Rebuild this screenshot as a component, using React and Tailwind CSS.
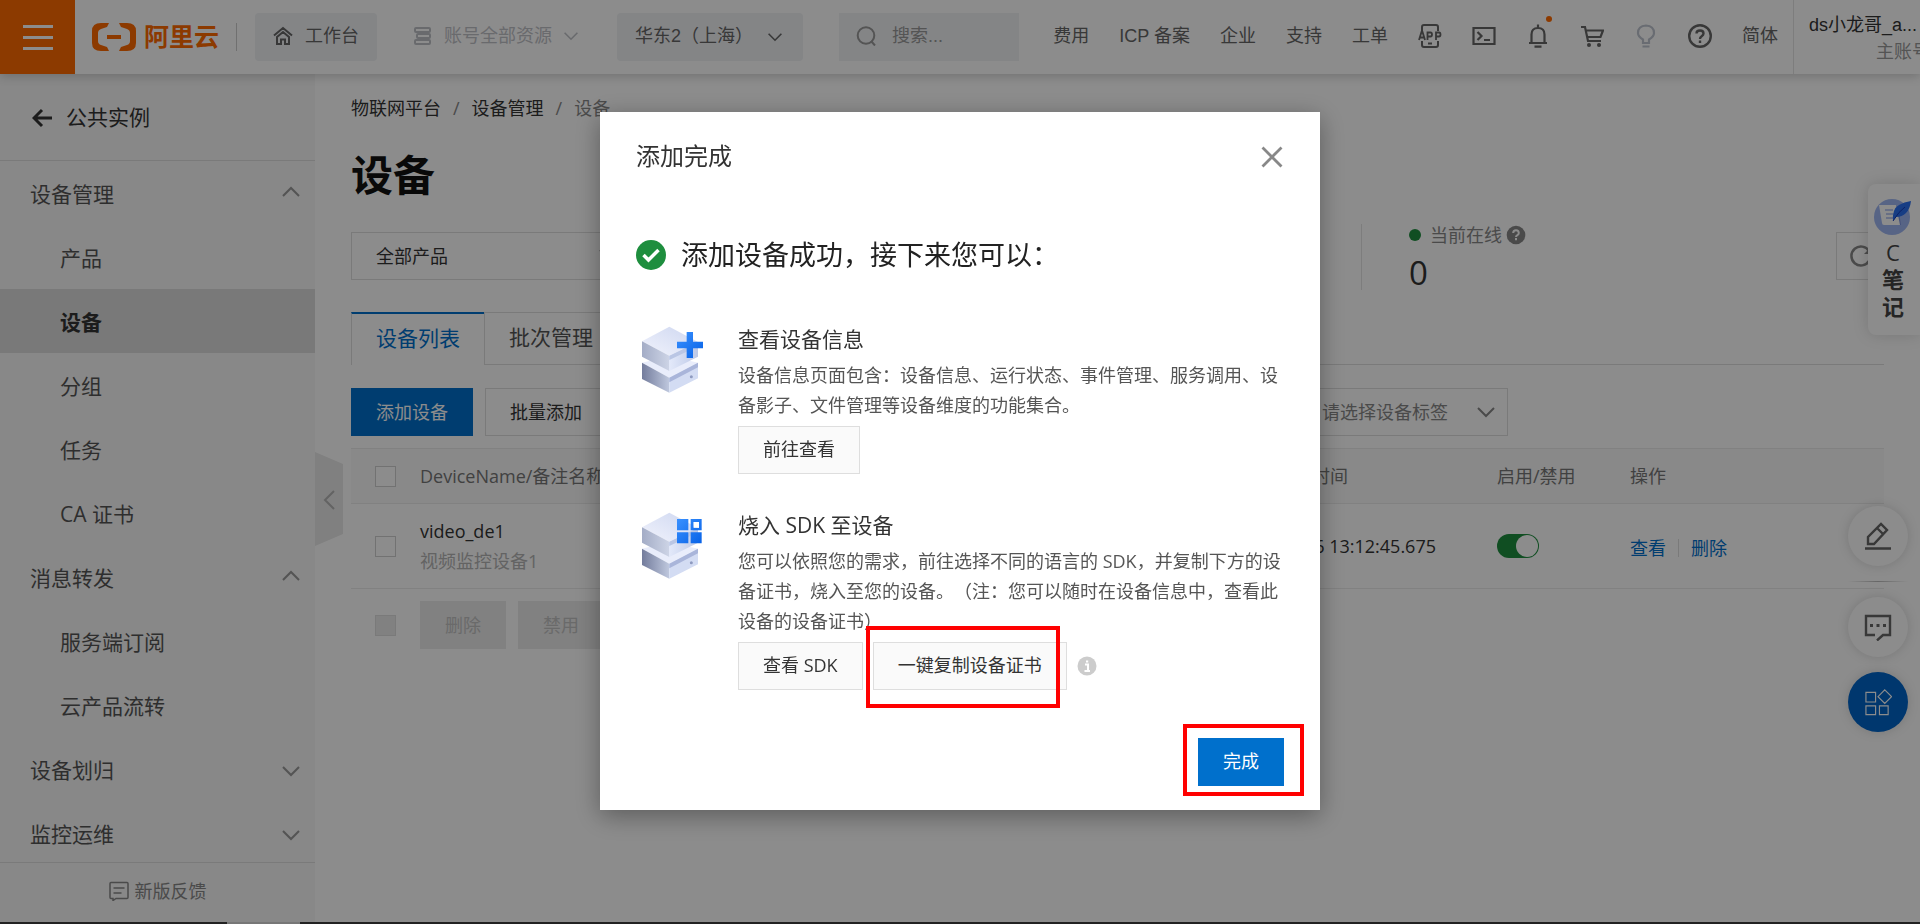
import { useState } from 'react'

const topLinks = ['费用', 'ICP 备案', '企业', '支持', '工单']

const menu = [
  { label: '设备管理', open: true, children: ['产品', '设备', '分组', '任务', 'CA 证书'] },
  { label: '消息转发', open: true, children: ['服务端订阅', '云产品流转'] },
  { label: '设备划归', open: false, children: [] },
  { label: '监控运维', open: false, children: [] },
]

const Chevron = ({ up, className }) => (
  <svg viewBox="0 0 20 20" fill="none" stroke="currentColor" strokeWidth="2" className={className}>
    <path d={up ? 'M2 11l8-8 8 8' : 'M2 6l8 8 8-8'} />
  </svg>
)

const Logo = () => (
  <svg viewBox="0 0 44 28" fill="#ff6a00" className="h-7 w-11">
    <path d="M17 0H9Q0 0 0 8v12q0 8 9 8h8l-2-4-6-2q-3-1-3-4v-8q0-3 3-4l6-2z" />
    <path d="M27 0h8q9 0 9 8v12q0 8-9 8h-8l2-4 6-2q3-1 3-4v-8q0-3-3-4l-6-2z" />
    <path d="M15 12h14v4H15z" />
  </svg>
)

const HomeIcon = () => (
  <svg viewBox="0 0 20 20" fill="none" stroke="currentColor" strokeWidth="2" className="size-5">
    <path d="M1 9.500L10 2l9 7.500M4 18v-7l6-5 6 5v7h-4v-4.500H8V18z" />
  </svg>
)

const ResourceIcon = () => (
  <svg viewBox="0 0 20 20" fill="none" stroke="currentColor" strokeWidth="2" className="size-5">
    <rect x="2" y="2" width="15" height="4" rx="1" />
    <rect x="4" y="8" width="13" height="4" rx="1" />
    <rect x="2" y="14" width="15" height="4" rx="1" />
  </svg>
)

const AppIcon = () => (
  <svg viewBox="0 0 24 24" fill="none" stroke="currentColor" strokeWidth="2" className="size-6">
    <path d="M4 7V3q0-2 2-2h12q2 0 2 2v4M4 17v4q0 2 2 2h12q2 0 2-2v-4" />
    <path d="M1 16l2.500-8h1l2.500 8M2 13.500h4M9.500 16V8.500h3q1.500 0 1.500 2t-1.500 2h-3M18 16V8.500h3q1.500 0 1.500 2t-1.500 2h-3" strokeWidth="1.800" />
    <path d="M10 19.500h4" />
  </svg>
)

const TerminalIcon = () => (
  <svg viewBox="0 0 24 24" fill="none" stroke="currentColor" strokeWidth="2.200" className="size-6">
    <path d="M1.500 4h21v16h-21zM5.500 8l4 4-4 4M12 16h6" />
  </svg>
)

const BellIcon = () => (
  <svg viewBox="0 0 24 24" fill="none" stroke="currentColor" strokeWidth="2.200" className="size-6">
    <path d="M3 19h18M5.500 19v-8.500q0-6.500 6.500-6.500t6.500 6.500V19M12 4V.500M8.500 22.700h7" />
  </svg>
)

const CartIcon = () => (
  <svg viewBox="0 0 24 24" fill="none" stroke="currentColor" strokeWidth="2.200" className="size-6">
    <path d="M1 3h4l3 14h13M6 6.500h17l-2.500 6.500H7.500" />
    <circle cx="9" cy="21" r="2" fill="currentColor" stroke="none" />
    <circle cx="19" cy="21" r="2" fill="currentColor" stroke="none" />
  </svg>
)

const BulbIcon = () => (
  <svg viewBox="0 0 24 24" fill="none" stroke="currentColor" strokeWidth="2.200" className="size-6">
    <path d="M9 19v-3.500Q4 12.500 4 9q0-7 8-7.500 8 .500 8 7.500 0 3.500-5 6.500V19zM8.500 22.500h7" />
  </svg>
)

const HelpIcon = () => (
  <svg viewBox="0 0 24 24" fill="none" stroke="currentColor" strokeWidth="2.400" className="size-6">
    <circle cx="12" cy="12" r="10.800" />
    <path d="M8.500 9.500Q8.500 6.500 12 6.500t3.500 3q0 1.500-1.800 2.700T12 15" />
    <path d="M12 16.500v2.500" />
  </svg>
)

const ServerIcon = ({ id, children }) => (
  <svg viewBox="60 45 195 210" className="h-[70px] w-[65px] shrink-0">
    <defs>
      <linearGradient id={`${id}-top`} x1="0" x2="1" y1="1" y2="0">
        <stop offset="0" stopColor="#f1f3fc" />
        <stop offset="1" stopColor="#cdd6f0" />
      </linearGradient>
      <linearGradient id={`${id}-left`}>
        <stop offset="0" stopColor="#a3acc6" />
        <stop offset="1" stopColor="#cdd4e6" />
      </linearGradient>
      <linearGradient id={`${id}-right`}>
        <stop offset="0" stopColor="#e3e9fa" />
        <stop offset="1" stopColor="#bcc8e6" />
      </linearGradient>
      <linearGradient id={`${id}-dark`}>
        <stop offset="0" stopColor="#737c9c" />
        <stop offset="1" stopColor="#bfc8de" />
      </linearGradient>
      <linearGradient id={`${id}-blue`} gradientUnits="userSpaceOnUse" x1="171" x2="249" y1="66" y2="144">
        <stop offset="0" stopColor="#3b92ff" />
        <stop offset="1" stopColor="#0560e6" />
      </linearGradient>
    </defs>
    <path d="M66 158l82-20 86 20-86 45z" fill="#e9edfb" />
    <path d="M66 158l82 45v45l-82-41z" fill={`url(#${id}-dark)`} />
    <path d="M148 203l86-45v47l-86 43z" fill="#d3dcf3" />
    <path d="M148 203l86-45v14l-86 45z" fill="#a9b5da" />
    <path d="M148 50L66 94l82 43 86-41z" fill={`url(#${id}-top)`} />
    <path d="M66 94l82 43v46l-82-43z" fill={`url(#${id}-left)`} />
    <path d="M148 137l86-41v44l-86 43z" fill={`url(#${id}-right)`} />
    <path d="M148 137l86-41v13l-86 41z" fill="#bac6e4" />
    <circle cx="214" cy="200" r="4.500" fill="#8f9bc0" />
    {children}
  </svg>
)

const NoteIcon = () => (
  <svg viewBox="0 0 40 38" className="h-[38px] w-10">
    <circle cx="19" cy="20" r="18" fill="#9fb6f2" />
    <path d="M8 9h17l3 19H12q-2 0-2-3z" fill="#7d94e0" />
    <path d="M6 8h17l4 20H11q-2 0-2-2z" fill="#fff" />
    <path d="M12 13h8M13 17h8M13 21h8" stroke="#a9b9ee" strokeWidth="1.500" />
    <path d="M20 24q-1-12 6-16 5-3 12-4-1 8-5 12-4 4-10 4z" fill="#2a6ff0" />
    <path d="M20 24q6-10 12-14" stroke="#173bb8" fill="none" />
  </svg>
)

const DefaultButton = ({ children, onClick }) => (
  <button
    type="button"
    onClick={onClick}
    className="h-12 border border-[#dedede] bg-[#fafafa] px-6 pb-0.5 text-lg text-[#333] hover:bg-gray-100"
  >
    {children}
  </button>
)

const Check = ({ label, disabled }) => (
  <input
    type="checkbox"
    aria-label={label}
    disabled={disabled}
    className="block size-[21px] appearance-none border border-[#d0d0d0] bg-white disabled:border-[#dedede] disabled:bg-[#ebebeb]"
  />
)

const Header = () => (
  <header className="relative z-10 flex h-[74px] shrink-0 items-center bg-white font-['Liberation_Sans','Noto_Sans_CJK_SC',sans-serif] text-lg text-[#666] shadow-[0_2px_10px_rgba(0,0,0,0.2)]">
    <button type="button" aria-label="菜单" className="flex h-full w-[75px] shrink-0 flex-col items-center justify-center gap-2 bg-[#ff6a00]">
      <span className="h-[3px] w-[30px] bg-white" />
      <span className="h-[3px] w-[30px] bg-white" />
      <span className="h-[3px] w-[30px] bg-white" />
    </button>
    <a href="#" className="ml-[17px] flex shrink-0 items-center gap-2 text-[25px] font-bold text-[#ff6a00]">
      <Logo />
      阿里云
    </a>
    <span className="ml-[17px] h-7 w-px shrink-0 bg-[#ccc]" />
    <a href="#" className="ml-[18px] flex h-12 shrink-0 items-center gap-3 rounded-sm bg-[#f0f2f5] pr-[18px] pb-0.5 pl-[18px]">
      <HomeIcon />
      工作台
    </a>
    <button type="button" className="ml-9 flex shrink-0 items-center gap-[11px] pb-0.5 text-[#bfc2c7]">
      <ResourceIcon />
      账号全部资源
      <Chevron className="size-4" />
    </button>
    <div className="relative ml-[38px] w-[186px] shrink-0">
      <select aria-label="地域" className="h-12 w-full appearance-none rounded-sm bg-[#f0f2f5] pb-0.5 pl-[18px]">
        <option>华东2（上海）</option>
      </select>
      <Chevron className="pointer-events-none absolute top-4 right-5 size-4" />
    </div>
    <div className="ml-9 flex h-12 w-[180px] items-center gap-4 bg-[#f0f2f5] pb-0.5 pl-[17px]">
      <svg viewBox="0 0 20 20" fill="none" stroke="#999" strokeWidth="2" className="size-5 shrink-0">
        <circle cx="10" cy="9.500" r="8.300" />
        <path d="M15 15l4 4.500" />
      </svg>
      <input type="text" aria-label="搜索" placeholder="搜索..." className="w-full min-w-0 bg-transparent outline-none placeholder:text-[#999]" />
    </div>
    <nav className="ml-auto flex shrink-0 items-center gap-[30px] pr-[15px] pb-0.5">
      {topLinks.map((text) => (
        <a key={text} href="#">{text}</a>
      ))}
      <a href="#" aria-label="App"><AppIcon /></a>
      <a href="#" aria-label="Cloud Shell"><TerminalIcon /></a>
      <a href="#" aria-label="消息" className="relative">
        <BellIcon />
        <span className="absolute -top-2 -right-0.5 size-1.5 rounded-full bg-[#ff6a00]" />
      </a>
      <a href="#" aria-label="购物车"><CartIcon /></a>
      <a href="#" aria-label="提示" className="text-[#bfc5d0]"><BulbIcon /></a>
      <a href="#" aria-label="帮助"><HelpIcon /></a>
      <a href="#">简体</a>
    </nav>
    <div className="h-full w-[127px] shrink-0 overflow-hidden border-l border-[#e3e3e3] pt-3 pl-[15px] leading-[27px]">
      <div className="flex w-[121px] flex-col whitespace-nowrap">
        <span className="text-[#333]">ds小龙哥_a...</span>
        <span className="text-right text-[#999]">主账号</span>
      </div>
    </div>
  </header>
)

const Sidebar = () => (
  <aside className="relative flex w-[315px] shrink-0 flex-col bg-[#f7f7f7] text-[21px] text-[#555]">
    <a href="#" className="flex h-[87px] shrink-0 items-center gap-[14px] border-b border-[#dedede] pt-0.5 pl-8 text-[#333]">
      <svg viewBox="0 0 20 20" fill="none" stroke="currentColor" strokeWidth="3" className="size-5">
        <path d="M10 2l-8 8 8 8M2 10h18" />
      </svg>
      公共实例
    </a>
    <nav className="min-h-0 flex-1 overflow-hidden">
      {menu.map((group) => (
        <div key={group.label}>
          <button type="button" className="flex h-16 w-full items-center justify-between pt-1 pr-[14px] pl-[30px]">
            {group.label}
            <Chevron up={group.open} className="size-5 text-[#999]" />
          </button>
          {group.children.map((item) => (
            <a
              key={item}
              href="#"
              className={
                item === '设备'
                  ? 'flex h-16 items-center bg-[#dcdcdc] pt-1 pl-[60px] font-bold text-[#333]'
                  : 'flex h-16 items-center pt-1 pl-[60px]'
              }
            >
              {item}
            </a>
          ))}
        </div>
      ))}
    </nav>
    <a href="#" className="flex h-[60px] shrink-0 items-center justify-center gap-[6px] border-t border-[#dedede] pb-1 text-lg text-[#888]">
      <svg viewBox="0 0 20 20" fill="none" stroke="currentColor" strokeWidth="1.500" className="size-5">
        <path d="M2 1.500h16q1 0 1 1v14q0 1-1 1H7l-3 2v-2H2q-1 0-1-1v-14q0-1 1-1zM4.500 7h11M4.500 12h8" />
      </svg>
      新版反馈
    </a>
    <button type="button" aria-label="收起菜单" className="absolute top-[378px] left-full text-[#b5b5b5]">
      <svg viewBox="0 0 28 94" className="h-[94px] w-7">
        <path d="M0 0l28 12v70L0 94z" fill="#e9e9e9" />
        <path d="M19 39l-9 9 9 9" fill="none" stroke="currentColor" strokeWidth="2" />
      </svg>
    </button>
  </aside>
)

const DeviceTable = () => {
  const [enabled, setEnabled] = useState(true)

  return (
    <table className="mt-3 w-full table-fixed text-left">
      <colgroup>
        <col className="w-[45px]" />
        <col className="w-[300px]" />
        <col />
        <col className="w-[257px]" />
        <col className="w-[133px]" />
        <col className="w-[278px]" />
      </colgroup>
      <thead>
        <tr className="h-[55px] border-y border-[#ebebeb] bg-[#fafafa] text-[#777]">
          <th className="pl-6"><Check label="全选" /></th>
          <th className="pl-6 font-normal">DeviceName/备注名称</th>
          <th className="pl-6 font-normal">设备所属产品</th>
          <th className="pl-6 font-normal">最后上线时间</th>
          <th className="pl-6 font-normal">启用/禁用</th>
          <th className="pl-6 font-normal">操作</th>
        </tr>
      </thead>
      <tbody>
        <tr className="h-[85px] border-b border-[#ebebeb] text-[#333]">
          <td className="pl-6"><Check label="video_de1" /></td>
          <td className="pl-6 leading-[30px]">
            <div>video_de1</div>
            <div className="text-[#b5b5b5]">视频监控设备1</div>
          </td>
          <td />
          <td className="pr-[37px] text-right whitespace-nowrap">2021/12/06 13:12:45.675</td>
          <td className="pl-6">
            <label className="block w-[42px]">
              <input
                type="checkbox"
                aria-label="启用"
                checked={enabled}
                onChange={(e) => setEnabled(e.target.checked)}
                className="peer sr-only"
              />
              <span className="flex h-6 w-[42px] justify-start rounded-full bg-gray-300 p-px peer-checked:justify-end peer-checked:bg-[#1e8e3e]">
                <span className="size-[22px] rounded-full bg-white" />
              </span>
            </label>
          </td>
          <td className="pt-1 pl-6">
            <div className="flex items-center text-[#0070cc]">
              <a href="#">查看</a>
              <span className="mx-3 h-[18px] w-px bg-[#dedede]" />
              <a href="#">删除</a>
            </div>
          </td>
        </tr>
      </tbody>
    </table>
  )
}

const DevicePage = () => (
  <main className="min-w-0 flex-1 overflow-hidden bg-white pt-5 pr-9 pl-9 text-lg text-[#333]">
    <nav className="flex h-[27px] items-center gap-3">
      <a href="#">物联网平台</a>
      <span className="text-[#888]">/</span>
      <a href="#">设备管理</a>
      <span className="text-[#888]">/</span>
      <span className="text-[#888]">设备</span>
    </nav>
    <h1 className="mt-[25px] text-[42px] leading-[58px] font-bold text-[#111]">设备</h1>

    <div className="mt-5 flex items-start justify-between">
      <div className="relative mt-2 w-[285px]">
        <select aria-label="产品" className="h-12 w-full appearance-none border border-[#dedede] bg-white pl-6">
          <option>全部产品</option>
        </select>
        <Chevron className="pointer-events-none absolute top-3 right-[18px] size-5 text-[#888]" />
      </div>
      <div className="flex items-start">
        <div className="h-[66px] border-l border-[#e3e3e3] pr-[310px] pl-[47px]">
          <div className="flex h-6 items-center pb-0.5 text-[#888]">
            <span className="mr-[9px] size-3 rounded-full bg-[#1e8e3e]" />
            当前在线
            <svg viewBox="0 0 20 20" className="ml-1 size-5">
              <circle cx="10" cy="10" r="9.300" fill="#888" />
              <path d="M7.200 8Q7.200 5.200 10 5.200T12.800 8q0 1.300-1.400 2.100T10 12" fill="none" stroke="#fff" strokeWidth="2" />
              <path d="M10 13v2.300" stroke="#fff" strokeWidth="2" />
            </svg>
          </div>
          <p className="mt-1 text-[33px] leading-[42px]">0</p>
        </div>
        <button type="button" aria-label="刷新" className="mt-2 flex size-12 items-center border border-[#dedede] pl-3 text-[#888]">
          <svg viewBox="0 0 24 24" fill="none" stroke="currentColor" strokeWidth="2.500" className="size-6">
            <path d="M20 17a9.500 9.500 0 1 1 0-10" />
            <path d="M22 3v7h-7z" fill="currentColor" stroke="none" />
          </svg>
        </button>
      </div>
    </div>

    <div className="mt-[22px] flex h-[53px] text-[21px]">
      <button type="button" className="border-t-2 border-l border-t-[#0070cc] border-l-[#dedede] px-6 pb-0.5 text-[#0070cc]">设备列表</button>
      <button type="button" className="border border-[#dedede] px-6 pb-0.5 text-[#555]">批次管理</button>
      <div className="flex-1 border-b border-[#dedede]" />
    </div>

    <div className="mt-[23px] flex items-center gap-3">
      <button type="button" className="h-12 bg-[#0070cc] px-[25px] text-white">添加设备</button>
      <button type="button" className="h-12 border border-[#dedede] px-6">批量添加</button>
      <div className="relative mr-[376px] ml-auto w-[211px]">
        <select aria-label="设备标签" className="h-12 w-full appearance-none border border-[#dedede] bg-white pl-6 text-[#888]">
          <option>请选择设备标签</option>
        </select>
        <Chevron className="pointer-events-none absolute top-3.5 right-3 size-5 text-[#888]" />
      </div>
    </div>

    <DeviceTable />

    <div className="mt-3 flex h-12 items-center gap-3 pl-6">
      <Check label="批量选择" disabled />
      <button type="button" disabled className="ml-3 h-12 bg-[#ebebeb] px-[25px] text-[#c1c1c1]">删除</button>
      <button type="button" disabled className="h-12 bg-[#ebebeb] px-[25px] text-[#c1c1c1]">禁用</button>
    </div>
  </main>
)

const FloatingTools = () => (
  <div className="absolute top-[184px] right-0 z-10 flex flex-col items-end">
    <button type="button" className="flex h-[151px] w-[52px] flex-col items-center rounded-l-lg bg-white pt-[13px] pr-0.5 text-[22px] leading-[27px] text-[#444] shadow-[0_0_16px_rgba(0,0,0,0.15)]">
      <NoteIcon />
      <span className="mt-1 font-medium">C</span>
      <span className="font-bold">笔</span>
      <span className="font-bold">记</span>
    </button>
    <div className="mt-[171px] mr-3 flex flex-col gap-[15px]">
      <button type="button" aria-label="编辑" className="flex size-[60px] items-center justify-center rounded-full bg-white text-[#666] shadow-[0_0_12px_rgba(0,0,0,0.15)]">
        <svg viewBox="0 0 28 28" fill="none" stroke="currentColor" strokeWidth="2.400" className="size-7">
          <path d="M4 22v-7L17 2l6 6-13 14zM13 6l6 6M1 26.500h26" />
        </svg>
      </button>
      <span className="h-px bg-linear-to-r from-transparent via-[#bbb] to-transparent" />
      <button type="button" aria-label="咨询" className="flex size-[60px] items-center justify-center rounded-full bg-white text-[#666] shadow-[0_0_12px_rgba(0,0,0,0.15)]">
        <svg viewBox="0 0 28 28" fill="none" stroke="currentColor" strokeWidth="2.400" className="size-7">
          <path d="M11 22H2V3h24v19h-7l-6 5.500" />
          <path d="M6 12.500h3M12.500 12.500h3M19 12.500h3" strokeWidth="3" />
        </svg>
      </button>
      <button type="button" aria-label="应用" className="flex size-[60px] items-center justify-center rounded-full bg-[#0064c8] text-white shadow-[0_0_12px_rgba(0,0,0,0.15)]">
        <svg viewBox="0 0 29 28" fill="none" stroke="currentColor" strokeWidth="1.200" className="size-7">
          <path d="M2 4h10v10H2zM2 18h10v9H2zM16 18h9v9h-9zM21.500 1.500l7 7-7 7-7-7z" />
        </svg>
      </button>
    </div>
  </div>
)

const DoneDialog = ({ onClose }) => (
  <div className="fixed inset-0 z-20 flex items-start justify-center bg-black/45 pt-28">
    <div
      role="dialog"
      aria-label="添加完成"
      className="w-[720px] bg-white px-9 pt-6 pb-6 text-[#333] shadow-[0_6px_24px_rgba(0,0,0,0.35)]"
    >
      <div className="flex h-10 items-center justify-between">
        <h2 className="text-2xl">添加完成</h2>
        <button type="button" aria-label="关闭" onClick={onClose} className="pt-0.5 text-[#888]">
          <svg viewBox="0 0 24 24" fill="none" stroke="currentColor" strokeWidth="2.800" className="size-6">
            <path d="M2.500 2.500l19 19M21.500 2.500l-19 19" />
          </svg>
        </button>
      </div>

      <div className="mt-[59px] flex h-10 items-center gap-[15px] text-[27px] text-[#222]">
        <svg viewBox="0 0 30 30" className="size-[30px]">
          <circle cx="15" cy="15" r="15" fill="#1e8e3e" />
          <path d="M7.500 15l5 5 10-10" fill="none" stroke="#fff" strokeWidth="3.500" />
        </svg>
        添加设备成功，接下来您可以：
      </div>

      <section className="mt-[50px] flex gap-[33px] pl-1">
        <ServerIcon id="info">
          <path d="M200 66h19v29h30v20h-30v29h-19v-29h-29V95h29z" fill="url(#info-blue)" />
        </ServerIcon>
        <div>
          <h3 className="text-[21px] leading-7">查看设备信息</h3>
          <p className="mt-[7px] mb-1.5 text-lg leading-[30px] text-[#555]">
            设备信息页面包含：设备信息、运行状态、事件管理、服务调用、设备影子、文件管理等设备维度的功能集合。
          </p>
          <DefaultButton>前往查看</DefaultButton>
        </div>
      </section>

      <section className="mt-[37px] flex gap-[33px] pl-1">
        <ServerIcon id="sdk">
          <path
            fillRule="evenodd"
            d="M171 69h34v34h-34zM171 109h34v33h-34zM212 109h33v33h-33zM212 69h33v34h-33zM221 78v17h16V78z"
            fill="url(#sdk-blue)"
          />
          <path d="M221 78h16v17h-16z" fill="#fff" />
        </ServerIcon>
        <div>
          <h3 className="text-[21px] leading-7">烧入 SDK 至设备</h3>
          <p className="mt-[7px] mb-1.5 text-lg leading-[30px] text-[#555] [text-spacing-trim:space-all]">
            您可以依照您的需求，前往选择不同的语言的 SDK，并复制下方的设备证书，烧入至您的设备。（注：您可以随时在设备信息中，查看此设备的设备证书）
          </p>
          <div className="flex items-center gap-2.5">
            <DefaultButton>查看 SDK</DefaultButton>
            <div className="relative">
              <DefaultButton>一键复制设备证书</DefaultButton>
              <span className="pointer-events-none absolute -top-4 -left-[7px] h-[82px] w-[194px] border-4 border-[#ff0000]" />
            </div>
            <svg viewBox="0 0 20 20" className="size-5">
              <circle cx="10" cy="10" r="9.500" fill="#ccc" />
              <path d="M8 8.500h3V15M7.500 15h5.500M9 5.500h2.200" fill="none" stroke="#fff" strokeWidth="2" />
            </svg>
          </div>
        </div>
      </section>

      <div className="mt-12 flex justify-end">
        <div className="relative">
          <button type="button" onClick={onClose} className="block h-12 bg-[#0070cc] px-[25px] pb-0.5 text-lg text-white">
            完成
          </button>
          <span className="pointer-events-none absolute -top-3.5 -left-[15px] h-[72px] w-[121px] border-4 border-[#ff0000]" />
        </div>
      </div>
    </div>
  </div>
)

const App = () => {
  const [showDialog, setShowDialog] = useState(true)

  return (
    <div className="relative flex h-screen flex-col overflow-hidden bg-white font-['Open_Sans','Noto_Sans_CJK_SC',sans-serif]">
      <Header />
      <div className="flex min-h-0 flex-1">
        <Sidebar />
        <DevicePage />
      </div>
      <FloatingTools />
      {showDialog && <DoneDialog onClose={() => setShowDialog(false)} />}
      <div className="relative z-30 h-0.5 shrink-0 bg-[#222] pl-[227px]">
        <div className="h-full w-[73px] bg-[#777]" />
      </div>
    </div>
  )
}

export default App
